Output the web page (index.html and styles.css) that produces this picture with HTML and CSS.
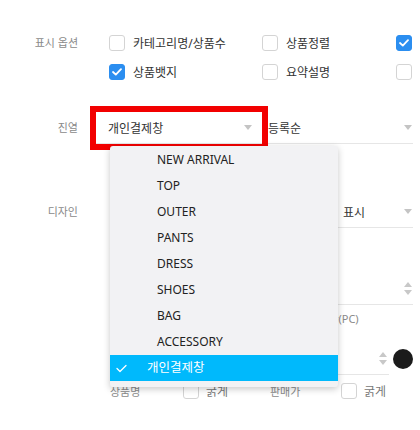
FILE: index.html
```html
<!DOCTYPE html>
<html lang="ko">
<head>
<meta charset="utf-8">
<link rel="stylesheet" href="styles.css">
</head>
<body>
<div class="form">
  <div class="row opts">
    <div class="label">표시 옵션</div>
    <div class="opt-grid">
      <label class="chk"><span class="box"></span>카테고리명/상품수</label>
      <label class="chk"><span class="box"></span>상품정렬</label>
      <label class="chk"><span class="box on"><svg width="10" height="8" viewBox="0 0 10 8"><polyline points="1,4 3.8,6.6 9,1.2" fill="none" stroke="#fff" stroke-width="1.8" stroke-linecap="round" stroke-linejoin="round"/></svg></span>할인율</label>
      <label class="chk"><span class="box on"><svg width="10" height="8" viewBox="0 0 10 8"><polyline points="1,4 3.8,6.6 9,1.2" fill="none" stroke="#fff" stroke-width="1.8" stroke-linecap="round" stroke-linejoin="round"/></svg></span>상품뱃지</label>
      <label class="chk"><span class="box"></span>요약설명</label>
      <label class="chk"><span class="box"></span>리뷰수</label>
    </div>
  </div>

  <div class="row sort">
    <div class="label">진열</div>
    <div class="select sel1 hl">
      <span>개인결제창</span><span class="caret"></span>
      <ul class="dropdown">
        <li>NEW ARRIVAL</li>
        <li>TOP</li>
        <li>OUTER</li>
        <li>PANTS</li>
        <li>DRESS</li>
        <li>SHOES</li>
        <li>BAG</li>
        <li>ACCESSORY</li>
        <li class="selected"><svg class="tick" width="11" height="9" viewBox="0 0 11 9"><polyline points="1,4.5 4,7.5 10,1.5" fill="none" stroke="#fff" stroke-width="1.3" stroke-linecap="round" stroke-linejoin="round"/></svg>개인결제창</li>
      </ul>
    </div>
    <div class="select sel2"><span>등록순</span><span class="caret"></span></div>
  </div>

  <div class="row design">
    <div class="label">디자인</div>
    <div class="design-grid">
      <div class="select"><span>상품명</span><span class="caret"></span></div>
      <div class="select shifted"><span>표시</span><span class="caret"></span></div>

      <div class="sublabel">글자 크기</div>
      <div class="sublabel">글자 크기</div>

      <div class="select num"><span>14</span><span class="spin"><i class="up"></i><i class="down"></i></span></div>
      <div class="select num"><span>12</span><span class="spin"><i class="up"></i><i class="down"></i></span></div>

      <div class="sublabel">글자 색상</div>
      <div class="sublabel pc">상품명 글자(PC)</div>

      <div class="select num"><span>14</span><span class="spin"><i class="up"></i><i class="down"></i></span></div>
      <div class="color-field">
        <div class="select num short"><span>13</span><span class="spin"><i class="up"></i><i class="down"></i></span></div>
        <span class="swatch"></span>
      </div>

      <div class="bold-row"><span class="sub">상품명</span><label class="chk"><span class="box"></span>굵게</label></div>
      <div class="bold-row"><span class="sub">판매가</span><label class="chk"><span class="box"></span>굵게</label></div>
    </div>
  </div>
</div>
</body>
</html>
```

FILE: styles.css
```css
html, body {
  margin: 0;
  padding: 0;
}
body {
  width: 420px;
  height: 430px;
  overflow: hidden;
  background: #fff;
  font-family: "Noto Sans", "Noto Sans CJK KR", sans-serif;
  font-size: 12px;
  color: #333;
}
.form {
  width: 420px;
  padding-top: 28px;
  overflow: hidden;
}
.row {
  display: flex;
  align-items: flex-start;
}
.label {
  flex: none;
  width: 78px;
  text-align: right;
  color: #8a8a8a;
  font-size: 11px;
}
.opts .label { line-height: 29px; }
.opt-grid {
  flex: none;
  margin-left: 31px;
  display: grid;
  grid-template-columns: 153px 134px 120px;
  grid-auto-rows: 29px;
  white-space: nowrap;
}
.chk {
  display: flex;
  align-items: center;
  gap: 8px;
  white-space: nowrap;
}
.box {
  flex: none;
  width: 16px;
  height: 16px;
  box-sizing: border-box;
  border: 1px solid #d4d4d4;
  border-radius: 3px;
  background: #fff;
  display: flex;
  align-items: center;
  justify-content: center;
}
.box.on {
  background: #2b8ef0;
  border-color: #2b8ef0;
}

/* select */
.select {
  display: flex;
  align-items: center;
  justify-content: space-between;
  box-sizing: border-box;
  height: 32px;
  border-bottom: 1px solid #e6e6e6;
  white-space: nowrap;
}
.caret {
  width: 0;
  height: 0;
  border-left: 4.5px solid transparent;
  border-right: 4.5px solid transparent;
  border-top: 5px solid #c4c4c4;
}
.sort { margin-top: 26px; }
.sort .label { line-height: 32px; }
.sel1 {
  position: relative;
  margin-left: 18px;
  width: 166px;
  padding: 0 10px 0 12px;
  outline: 6px solid #f20000;
  z-index: 2;
}
.sel2 {
  margin-left: 6px;
  width: 145px;
  padding: 0 1px 0 0;
}

/* dropdown */
.dropdown {
  position: absolute;
  top: 34px;
  left: 14px;
  width: 228px;
  margin: 0;
  padding: 1px 0 6px;
  list-style: none;
  background: #f2f2f4;
  border-radius: 3px;
  box-shadow: 0 2px 7px rgba(0, 0, 0, 0.22);
  z-index: 5;
}
.dropdown li {
  height: 26px;
  line-height: 26px;
  padding-left: 47px;
  color: #222;
  font-size: 12px;
}
.dropdown li.selected {
  position: relative;
  padding-left: 37px;
  background: #00b9fc;
  color: #fff;
  font-size: 12.5px;
}
.tick {
  position: absolute;
  left: 6px;
  top: 9px;
}

/* design */
.design { margin-top: 52px; }
.design .label { line-height: 32px; }
.design-grid {
  flex: none;
  margin-left: 32px;
  display: grid;
  grid-template-columns: 152px 145px;
  column-gap: 6px;
}
.design-grid .select { padding-right: 1px; }
.shifted { padding-left: 75px; }
.sublabel {
  color: #8a8a8a;
  font-size: 11px;
  line-height: 24px;
  margin-top: 10px;
  white-space: nowrap;
}
.sublabel.pc { padding-left: 17px; }
.num { margin-top: 11px; }
.design-grid > .sublabel:nth-child(7),
.design-grid > .sublabel:nth-child(8) { margin-top: 2px; }
.design-grid > .num:nth-child(9) { margin-top: 12px; }
.color-field {
  margin-top: 12px;
  display: flex;
  align-items: center;
  gap: 4px;
}
.color-field .num.short {
  margin-top: 0;
  width: 121px;
  padding-right: 2px;
}
.swatch {
  flex: none;
  width: 20px;
  height: 20px;
  border-radius: 50%;
  background: #1b1b1b;
}
.spin {
  display: flex;
  flex-direction: column;
  gap: 3px;
}
.spin i {
  display: block;
  width: 0;
  height: 0;
  border-left: 4px solid transparent;
  border-right: 4px solid transparent;
}
.spin .up { border-bottom: 5px solid #c8c8c8; }
.spin .down { border-top: 5px solid #c8c8c8; }

.bold-row {
  display: flex;
  align-items: center;
  height: 24px;
  margin-top: 4px;
  color: #777;
}
.bold-row .sub {
  width: 73px;
  color: #8a8a8a;
  font-size: 11px;
}
.bold-row:last-child .sub { width: 73px; padding-left: 2px; box-sizing: border-box; }
.bold-row .chk { gap: 7px; color: #777; }
```
